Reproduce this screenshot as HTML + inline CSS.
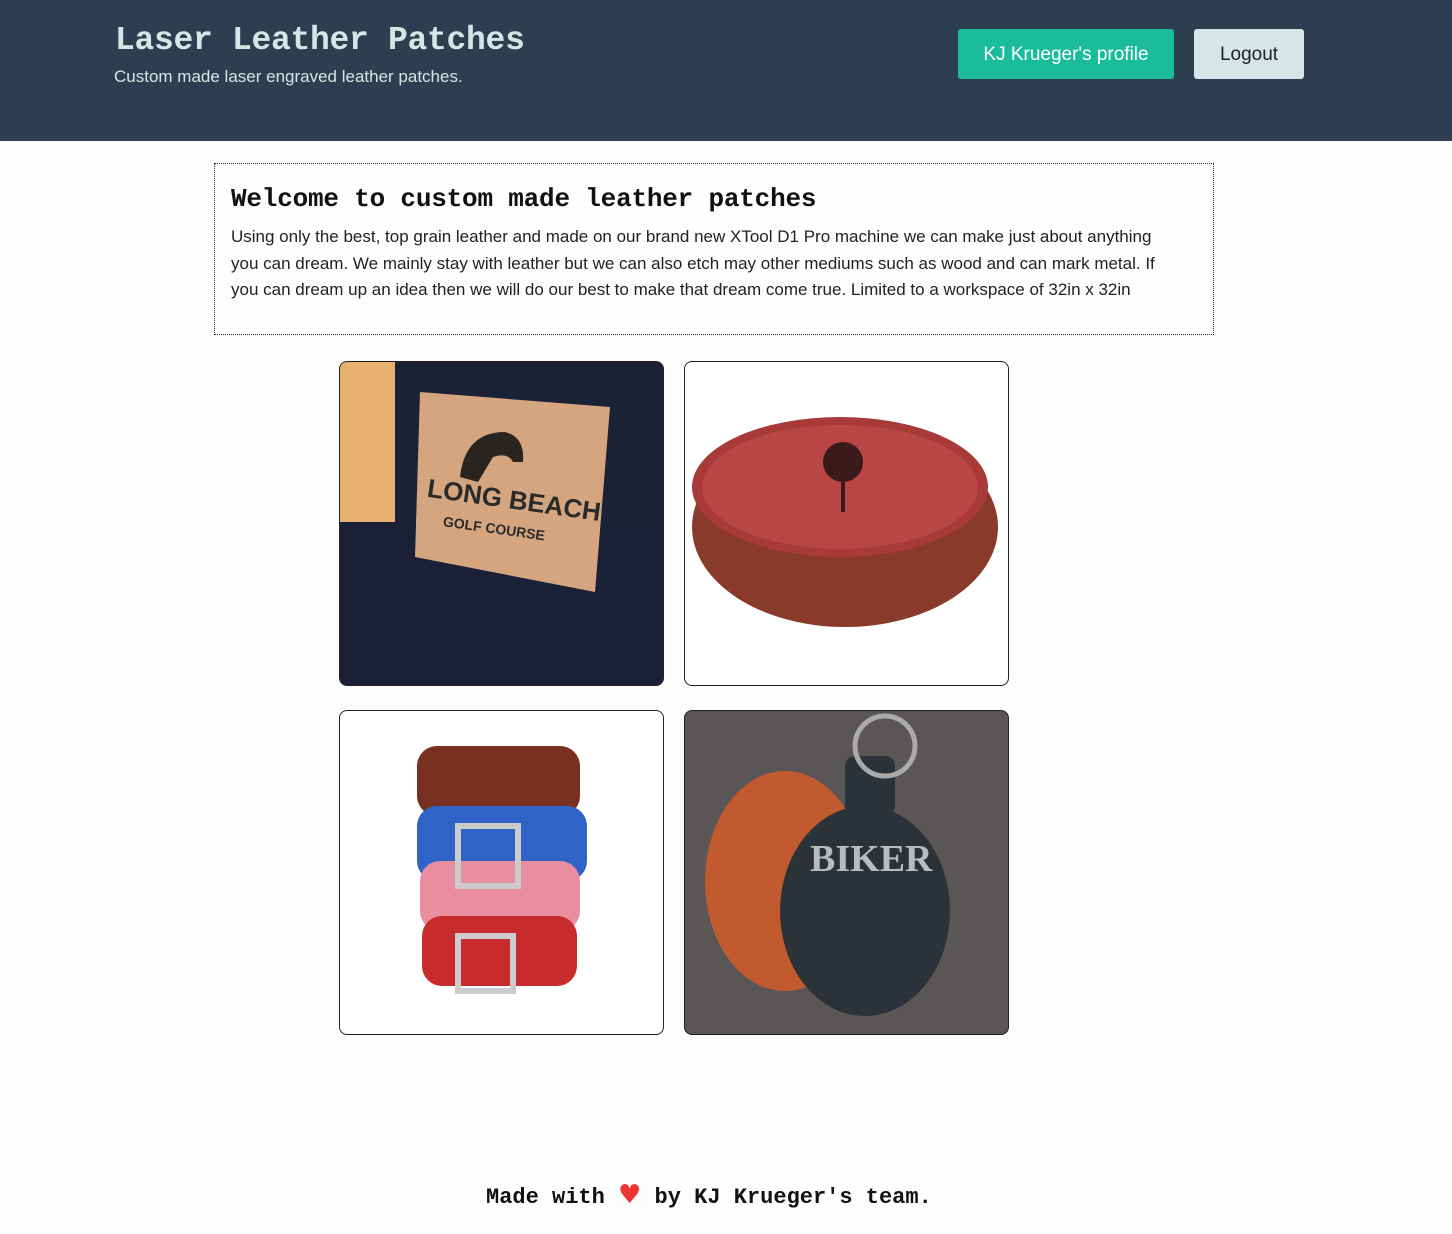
<!DOCTYPE html>
<html><head><meta charset="utf-8"><style>
*{box-sizing:border-box;margin:0;padding:0}
body{width:1452px;height:1234px;background:#fdfdfd;font-family:"Liberation Sans",sans-serif;position:relative;overflow:hidden}
.hdr{position:absolute;left:0;top:0;width:1452px;height:141px;background:#2c3e50}
.t{position:absolute;left:115px;top:22px;font:bold 33px "Liberation Mono",monospace;color:#d5e6e6;letter-spacing:-0.3px}
.st{position:absolute;left:114px;top:67px;font-size:17px;color:#d5e6e6}
.b1{position:absolute;left:958px;top:29px;width:216px;height:50px;background:#1abc9c;color:#fff;border-radius:3px;font-size:19px;text-align:center;line-height:52px}
.b2{position:absolute;left:1194px;top:29px;width:110px;height:50px;background:#d6e5e5;color:#222;border-radius:3px;font-size:19px;text-align:center;line-height:52px}
.box{position:absolute;left:214px;top:163px;width:1000px;height:172px;border:1px dotted #333}
.box h2{position:absolute;left:16px;top:20px;font:bold 26px "Liberation Mono",monospace;color:#111;letter-spacing:-0.2px}
.box p{position:absolute;left:16px;top:60px;width:945px;font-size:17px;line-height:26.5px;color:#222}
.c{position:absolute;width:325px;height:325px;border:1px solid #222;border-radius:8px;overflow:hidden;background:#fff}
.ft{position:absolute;left:486px;top:1180px;font:bold 22px "Liberation Mono",monospace;color:#111;white-space:nowrap}
</style></head><body>
<div class="hdr"><div class="t">Laser Leather Patches</div><div class="st">Custom made laser engraved leather patches.</div>
<div class="b1">KJ Krueger's profile</div><div class="b2">Logout</div></div>
<div class="box"><h2>Welcome to custom made leather patches</h2>
<p>Using only the best, top grain leather and made on our brand new XTool D1 Pro machine we can make just about anything you can dream. We mainly stay with leather but we can also etch may other mediums such as wood and can mark metal. If you can dream up an idea then we will do our best to make that dream come true. Limited to a workspace of 32in x 32in</p></div>
<div class="c" style="left:339px;top:361px;background:#1c2236"><svg width="325" height="325"><rect x="0" y="0" width="55" height="325" fill="#e8b070"/><rect x="0" y="160" width="325" height="165" fill="#1a2035"/><polygon points="80,30 270,45 255,230 75,195" fill="#d4a57f"/><text x="85" y="145" font-family="Liberation Sans" font-weight="bold" font-size="26" fill="#2a2a2a" transform="rotate(8 160 150)">LONG BEACH</text><text x="105" y="172" font-family="Liberation Sans" font-weight="bold" font-size="14" fill="#2a2a2a" transform="rotate(8 160 150)">GOLF COURSE</text><path d="M120 115 q5-45 45-45 q20 5 18 30 l-10 0 q-5-10-20-5 l-15 25z" fill="#2a2520"/></svg></div>
<div class="c" style="left:684px;top:361px"><svg width="325" height="325"><ellipse cx="160" cy="165" rx="153" ry="100" fill="#8a3a2a"/><ellipse cx="155" cy="125" rx="148" ry="70" fill="#a83a3a"/><ellipse cx="155" cy="125" rx="138" ry="62" fill="#b94545"/><circle cx="158" cy="100" r="20" fill="#3a1a1a"/><rect x="156" y="110" width="4" height="40" fill="#3a1a1a"/></svg></div>
<div class="c" style="left:339px;top:710px"><svg width="325" height="325"><rect x="77" y="35" width="163" height="70" rx="20" fill="#7a3020"/><rect x="77" y="95" width="170" height="75" rx="20" fill="#2f63c8"/><rect x="80" y="150" width="160" height="70" rx="20" fill="#e88ea0"/><rect x="82" y="205" width="155" height="70" rx="20" fill="#c82b2b"/><rect x="118" y="115" width="60" height="60" fill="none" stroke="#ccc" stroke-width="6"/><rect x="118" y="225" width="55" height="55" fill="none" stroke="#ccc" stroke-width="6"/></svg></div>
<div class="c" style="left:684px;top:710px;background:#5b5656"><svg width="325" height="325"><ellipse cx="100" cy="170" rx="80" ry="110" fill="#c25a30"/><ellipse cx="180" cy="200" rx="85" ry="105" fill="#2c3338"/><rect x="160" y="45" width="50" height="60" rx="10" fill="#2c3338"/><circle cx="200" cy="35" r="30" fill="none" stroke="#aaa" stroke-width="5"/><text x="125" y="160" font-family="Liberation Serif" font-weight="bold" font-size="38" fill="#bbb">BIKER</text></svg></div>
<div class="ft">Made with <span style="color:#e33;font-family:'DejaVu Sans';font-size:26px">♥</span> by KJ Krueger's team.</div>
</body></html>
